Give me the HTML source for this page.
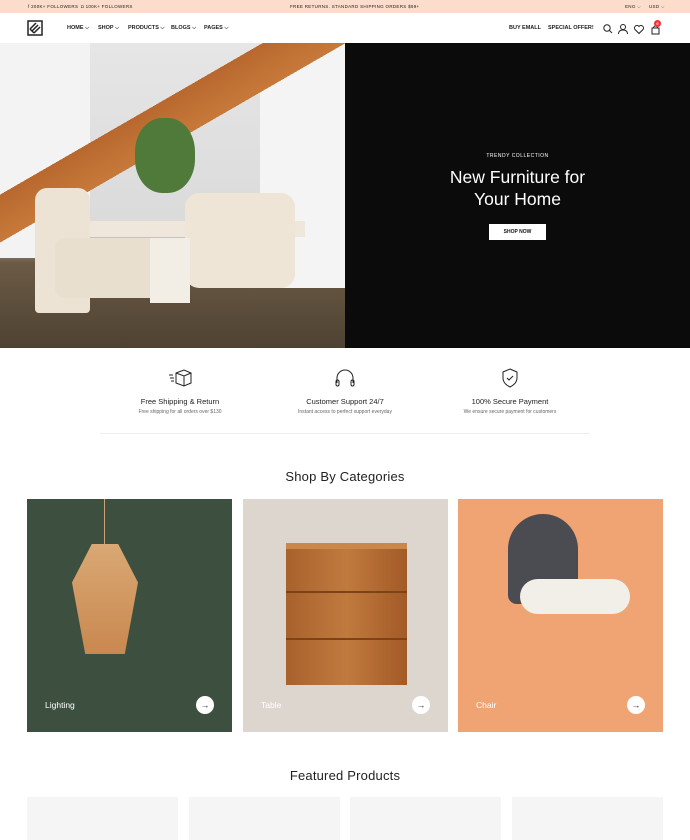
<!DOCTYPE html>
<html><head><meta charset="utf-8"><style>
*{margin:0;padding:0;box-sizing:border-box}
body{width:690px;height:840px;overflow:hidden;background:#fff;font-family:"Liberation Sans",sans-serif;color:#222;position:relative}
.a{position:absolute}
.top{top:0;left:0;width:690px;height:13px;background:#fcdccb;font-size:4.5px;letter-spacing:.3px}
.nav{top:13px;left:0;width:690px;height:30px;background:#fff;font-size:5.5px;font-weight:bold}
.feat{text-align:center;width:170px}
.feat b{display:block;font-size:7.5px;font-weight:normal;color:#222;margin-top:4px}
.feat s{display:block;text-decoration:none;font-size:5px;color:#666;margin-top:3px}
.card{top:499px;width:205px;height:233px;overflow:hidden}
.lbl{position:absolute;left:18px;top:201px;color:#fff;font-size:8.5px}
.arr{position:absolute;left:169px;top:197px;width:18px;height:18px;border-radius:50%;background:#fff;font-size:9px;text-align:center;line-height:18px;color:#333}
.h2{width:690px;text-align:center;font-size:13px;color:#222;letter-spacing:.2px}
.pc{top:797px;width:151px;height:43px;background:#f5f5f5}
</style></head><body>
<div class="a top">
 <span class="a" style="left:28px;top:4px">f 200K+ FOLLOWERS</span>
 <span class="a" style="left:81px;top:4px">◘ 100K+ FOLLOWERS</span>
 <span class="a" style="left:290px;top:4px">FREE RETURNS. STANDARD SHIPPING ORDERS $99+</span>
 <span class="a" style="left:625px;top:4px">ENG ⌵</span>
 <span class="a" style="left:649px;top:4px">USD ⌵</span>
</div>
<div class="a nav">
 <svg class="a" style="left:27px;top:7px" width="16" height="16" viewBox="0 0 16 16"><rect x="1" y="1" width="14" height="14" fill="none" stroke="#222" stroke-width="1.5"/><path d="M3 9l6-6M5 11l6-6M7 13l6-6M3 9l4 4" stroke="#222" stroke-width="1.5" fill="none"/></svg>
 <span class="a" style="left:67px;top:12px">HOME ⌵</span>
 <span class="a" style="left:98px;top:12px">SHOP ⌵</span>
 <span class="a" style="left:128px;top:12px">PRODUCTS ⌵</span>
 <span class="a" style="left:171px;top:12px">BLOGS ⌵</span>
 <span class="a" style="left:204px;top:12px">PAGES ⌵</span>
 <span class="a" style="left:509px;top:12px">BUY EMALL</span>
 <span class="a" style="left:548px;top:12px">SPECIAL OFFER!</span>
 <svg class="a" style="left:602px;top:10px" width="60" height="12" viewBox="0 0 60 12" fill="none" stroke="#222" stroke-width="1"><circle cx="5" cy="5" r="3.2"/><path d="M7.5 7.5l2.5 2.5"/><circle cx="21" cy="4" r="2.5"/><path d="M16.5 11c0-3 2-4 4.5-4s4.5 1 4.5 4"/><path d="M37 10.5l-4-4a2.3 2.3 0 0 1 4-3a2.3 2.3 0 0 1 4 3z"/><path d="M50 5h7v6h-7zM51.5 5a2 2 0 0 1 4 0"/></svg>
 <div class="a" style="left:654px;top:7px;width:7px;height:7px;border-radius:50%;background:#e33;color:#fff;font-size:4px;text-align:center;line-height:7px">0</div>
</div>
<!-- hero -->
<div class="a" style="left:0;top:43px;width:345px;height:305px;background:linear-gradient(180deg,#e6e6e6 0%,#dadada 62%,#6b5a45 72%,#4e4232 100%);overflow:hidden">
 <div class="a" style="left:0;top:0;width:90px;height:215px;background:#f3f3f3"></div>
 <div class="a" style="left:260px;top:0;width:85px;height:245px;background:#f4f4f4"></div>
 <div class="a" style="left:0;top:0;width:345px;height:200px;background:linear-gradient(150deg,transparent 38%,#b8682e 38%,#c7793a 50%,transparent 50%)"></div>
 <div class="a" style="left:75px;top:178px;width:230px;height:16px;background:#efe7dc"></div>
 <div class="a" style="left:135px;top:75px;width:60px;height:75px;border-radius:45%;background:#4f7a3a"></div>
 <div class="a" style="left:35px;top:145px;width:55px;height:125px;background:#ece3d4;border-radius:12px 12px 4px 4px"></div>
 <div class="a" style="left:55px;top:195px;width:115px;height:60px;background:#e8dfcf;border-radius:10px"></div>
 <div class="a" style="left:185px;top:150px;width:110px;height:95px;background:#eee5d6;border-radius:14px"></div>
 <div class="a" style="left:150px;top:195px;width:40px;height:65px;background:#f2ede5"></div>
</div>
<div class="a" style="left:345px;top:43px;width:345px;height:305px;background:#0c0b0b">
 <div class="a" style="left:0;top:110px;width:345px;text-align:center;color:#fff;font-size:5px;letter-spacing:.5px">TRENDY COLLECTION</div>
 <div class="a" style="left:0;top:123px;width:345px;text-align:center;color:#fff;font-size:17.5px;line-height:22px">New Furniture for<br>Your Home</div>
 <div class="a" style="left:144px;top:181px;width:57px;height:16px;background:#fff;color:#111;font-size:5px;font-weight:bold;text-align:center;line-height:16px">SHOP NOW</div>
</div>
<!-- features -->
<div class="a feat" style="left:95px;top:368px"><svg width="26" height="20" viewBox="0 0 26 20" fill="none" stroke="#222" stroke-width="1"><path d="M9 5l8-3 7 3v10l-7 3-8-3zM9 5l8 3 7-3M17 8v10M2 7h4M3 10h4M4 13h3"/></svg><b>Free Shipping &amp; Return</b><s>Free shipping for all orders over $130</s></div>
<div class="a feat" style="left:260px;top:368px"><svg width="26" height="20" viewBox="0 0 26 20" fill="none" stroke="#222" stroke-width="1"><path d="M5 15v-5a8 8 0 0 1 16 0v5"/><rect x="4" y="12" width="3" height="6" rx="1.5"/><rect x="19" y="12" width="3" height="6" rx="1.5"/></svg><b>Customer Support 24/7</b><s>Instant access to perfect support everyday</s></div>
<div class="a feat" style="left:425px;top:368px"><svg width="26" height="20" viewBox="0 0 26 20" fill="none" stroke="#222" stroke-width="1"><path d="M13 1l7 3v6c0 4-3 7-7 9-4-2-7-5-7-9V4z"/><path d="M10 10l2 2 4-4"/></svg><b>100% Secure Payment</b><s>We ensure secure payment for customers</s></div>
<div class="a" style="left:100px;top:433px;width:490px;height:1px;background:#eee"></div>
<div class="a h2" style="top:469px">Shop By Categories</div>
<div class="a card" style="left:27px;background:#3d5040">
 <div class="a" style="left:77px;top:0;width:1px;height:45px;background:#c9a27a"></div>
 <div class="a" style="left:45px;top:45px;width:66px;height:110px;background:linear-gradient(#d9a874,#c9884f);clip-path:polygon(30% 0,70% 0,100% 35%,80% 100%,20% 100%,0 35%)"></div>
 <div class="lbl">Lighting</div><div class="arr">→</div>
</div>
<div class="a card" style="left:243px;background:#ddd6cf">
 <div class="a" style="left:43px;top:44px;width:121px;height:142px;background:linear-gradient(90deg,#a9612c,#c07a3e,#a35a27);border-top:6px solid #c9884a"></div>
 <div class="a" style="left:43px;top:92px;width:121px;height:2px;background:#7d4218"></div>
 <div class="a" style="left:43px;top:139px;width:121px;height:2px;background:#7d4218"></div>
 <div class="lbl">Table</div><div class="arr">→</div>
</div>
<div class="a card" style="left:458px;background:#f0a473">
 <div class="a" style="left:50px;top:15px;width:70px;height:90px;background:#4b4b52;border-radius:40px 40px 10px 10px"></div>
 <div class="a" style="left:62px;top:80px;width:110px;height:35px;background:#f2efe8;border-radius:20px"></div>
 <div class="lbl">Chair</div><div class="arr">→</div>
</div>
<div class="a h2" style="top:768px">Featured Products</div>
<div class="a pc" style="left:27px"></div>
<div class="a pc" style="left:189px"></div>
<div class="a pc" style="left:350px"></div>
<div class="a pc" style="left:512px"></div>
</body></html>
